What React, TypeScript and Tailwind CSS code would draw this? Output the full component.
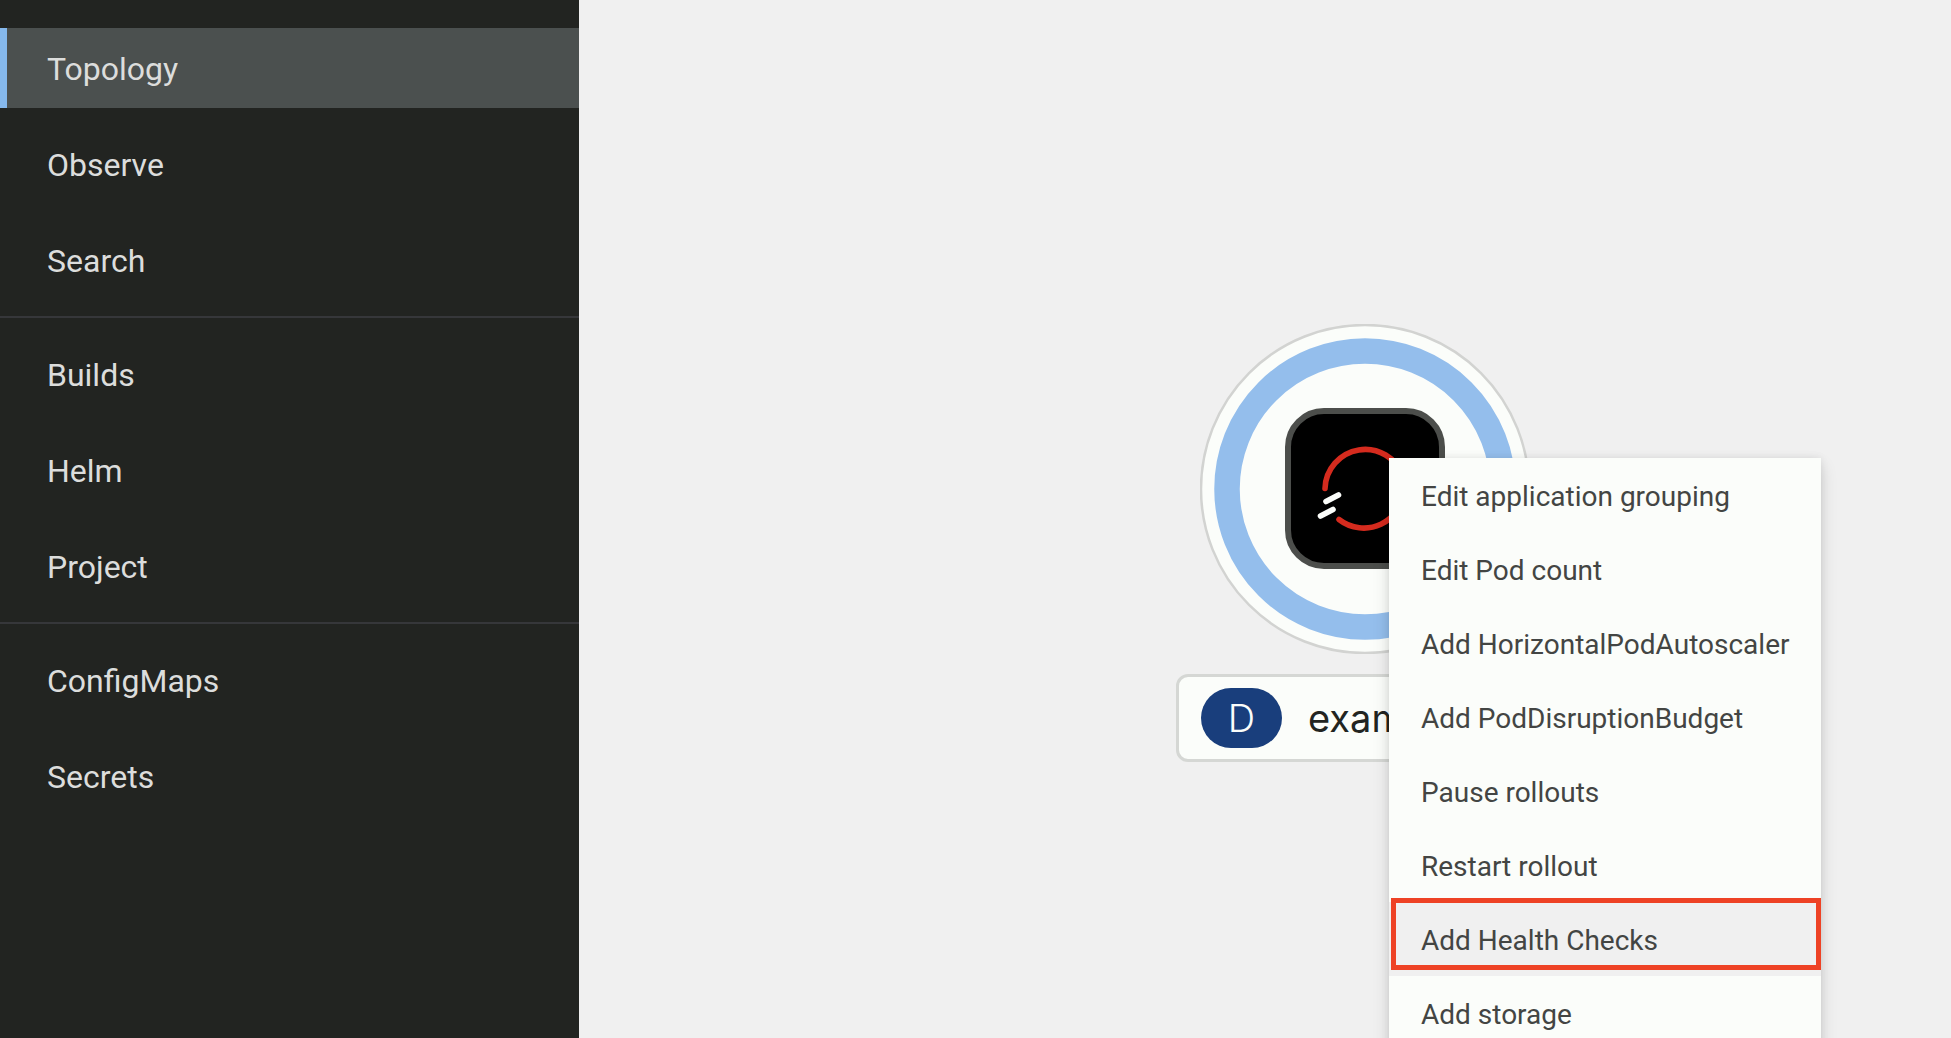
const navSections = [
  ['Topology', 'Observe', 'Search'],
  ['Builds', 'Helm', 'Project'],
  ['ConfigMaps', 'Secrets'],
];

const actions = [
  'Edit application grouping',
  'Edit Pod count',
  'Add HorizontalPodAutoscaler',
  'Add PodDisruptionBudget',
  'Pause rollouts',
  'Restart rollout',
  'Add Health Checks',
  'Add storage',
];

function Sidebar() {
  return (
    <nav aria-label="Developer" className="w-[579px] shrink-0 bg-[#222421] pt-3">
      {navSections.map((items) => (
        <ul
          key={items[0]}
          className="flex flex-col gap-4 border-b-2 border-[#36373a] py-4 last:border-b-0"
        >
          {items.map((item) => (
            <li key={item}>
              <a
                href={`#${item.toLowerCase()}`}
                aria-current={item === 'Topology' ? 'page' : undefined}
                className="flex h-20 items-center border-l-[7px] border-transparent pt-0.5 pl-10 text-[32px] leading-12 text-[#dcdddc] aria-[current=page]:border-[#85b8ec] aria-[current=page]:bg-[#4b504f]"
              >
                {item}
              </a>
            </li>
          ))}
        </ul>
      ))}
    </nav>
  );
}

function WorkloadNode() {
  return (
    <svg viewBox="0 0 330 330" className="size-[330px]" role="img" aria-label="Deployment">
      <circle cx="165" cy="165" r="164" fill="#fbfdfa" stroke="#d2d3d1" strokeWidth="2.5" />
      <circle cx="165" cy="165" r="138" fill="none" stroke="#94beec" strokeWidth="25.5" />
      <rect x="88" y="87" width="154" height="155" rx="36" fill="#000" stroke="#4c4e4b" strokeWidth="6" />
      <g fill="none" strokeWidth="5.6" strokeLinecap="round">
        <path
          d="M125 164.5A40.2 40.2 0 0 1 203 152M204 165A40.2 40.2 0 0 1 139 195.5"
          stroke="#d52b1e"
        />
        <path d="M126 177.5 138.5 171M120.5 192 133 185.5" stroke="#fbfdfa" />
      </g>
    </svg>
  );
}

function ContextMenu() {
  return (
    <div
      role="menu"
      className="absolute top-[458px] left-[810px] w-[432px] bg-[#fbfdfa] shadow-[0_8px_16px_rgba(3,3,3,0.14),0_0_8px_rgba(3,3,3,0.08)]"
    >
      {actions.map((action) => (
        <div key={action} className="relative">
          <button
            type="button"
            role="menuitem"
            className={`flex h-[74px] w-full items-center px-8 pt-1 text-left text-[28px] leading-[42px] whitespace-nowrap text-[#434543] ${
              action === 'Add Health Checks' ? 'bg-[#f0f0f0]' : ''
            }`}
          >
            {action}
          </button>
          {action === 'Add Health Checks' && (
            <span className="pointer-events-none absolute -top-1 right-0 bottom-1.5 left-0.5 border-5 border-[#ee4225]" />
          )}
        </div>
      ))}
    </div>
  );
}

export default function App() {
  return (
    <div className="flex h-screen overflow-hidden font-[Roboto,sans-serif]">
      <Sidebar />
      <main className="relative min-w-0 flex-1 overflow-hidden bg-[#f0f0f0]">
        <div className="absolute top-[324px] left-[597px] flex w-[378px] flex-col items-center gap-5">
          <WorkloadNode />
          <div className="flex h-[88px] w-full items-center gap-[26px] rounded-xl border-3 border-[#d5d7d4] bg-[#fbfdfa] pl-[22px] font-[Inter,sans-serif] text-[38px]">
            <span className="flex h-[60px] w-[81px] items-center justify-center rounded-[30px] bg-[#193e7c] font-light text-[#fbfdfa]">
              D
            </span>
            <span className="text-[#222421]">exam</span>
          </div>
        </div>
        <ContextMenu />
      </main>
    </div>
  );
}
